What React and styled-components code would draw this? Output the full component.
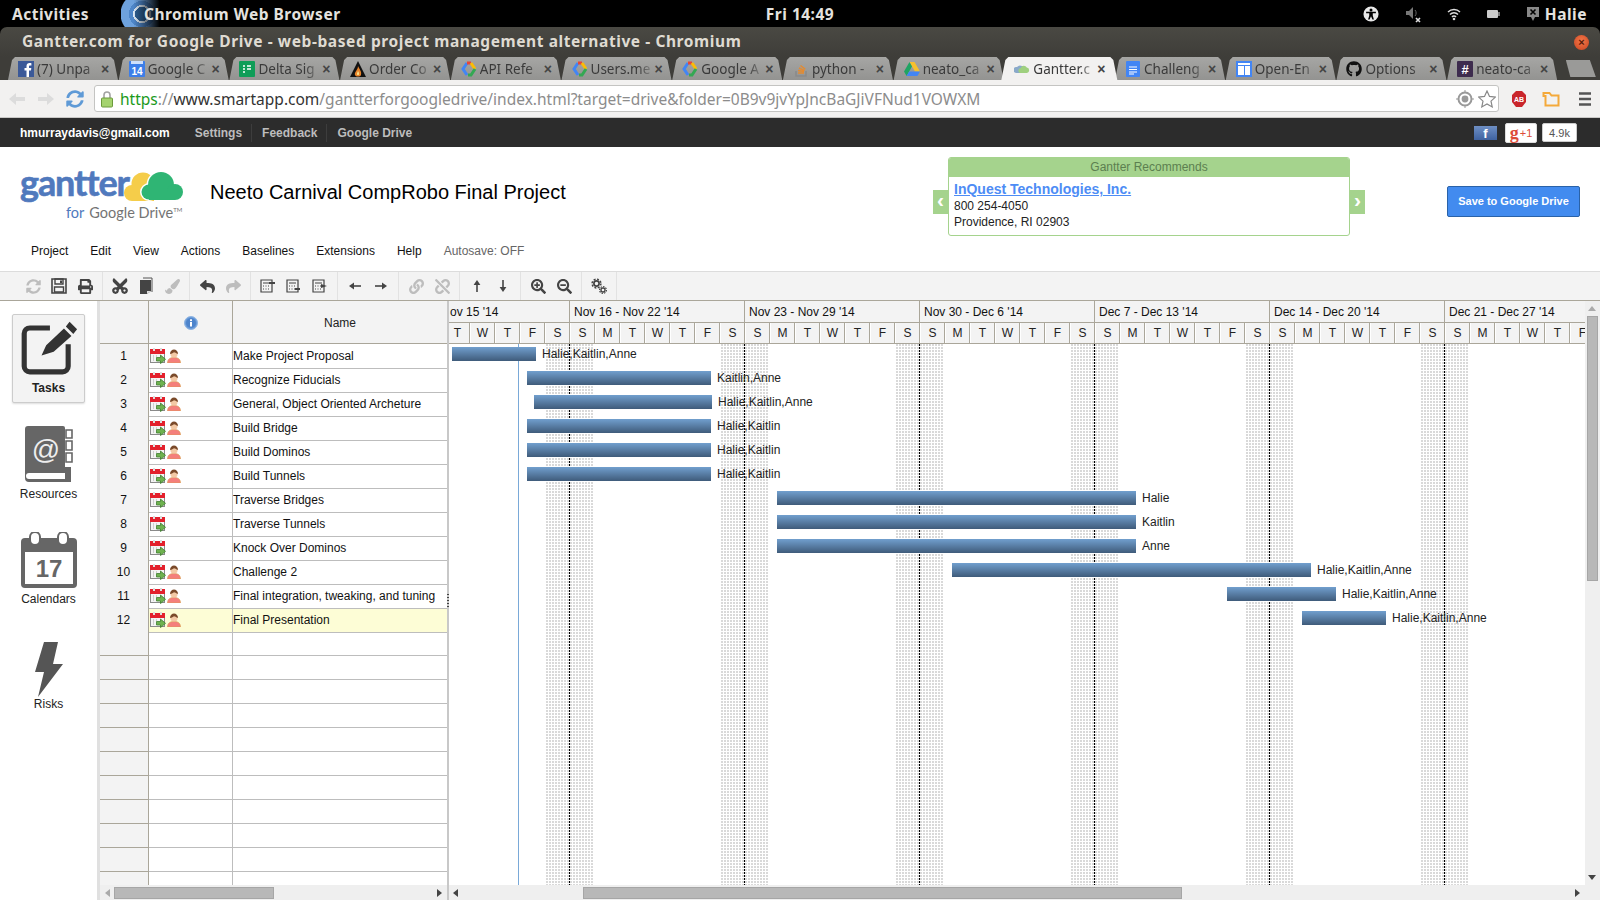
import React from "react";
import styled, { createGlobalStyle } from "styled-components";
import {
  FaPrint, FaCut, FaPaintBrush, FaReply, FaShare, FaLink, FaUnlink,
  FaSearchPlus, FaSearchMinus, FaGithub, FaSyncAlt,
} from "react-icons/fa";

const Global = createGlobalStyle`
  html, body { margin: 0; padding: 0; background: #fff; overflow: hidden; }
  * { box-sizing: border-box; }
  body { font-family: "Liberation Sans", Arial, sans-serif; font-size: 12px; color: #222; }
`;

const UI = `"Noto Sans", "Open Sans", sans-serif`;

const Page = styled.div`
  width: 1600px; height: 900px; overflow: hidden; display: flex; flex-direction: column; background: #000;
`;

/* ---------- GNOME top bar ---------- */
const TopBar = styled.div`
  height: 27px; flex: none; background: #000; color: #e4e2df;
  display: grid; grid-template-columns: 1fr auto 1fr; align-items: center;
  font: 700 15.5px ${UI}; letter-spacing: 0.5px;
`;
const TopLeft = styled.div`display: flex; align-items: center; padding-left: 12px;`;
const AppGlow = styled.div`
  width: 42px; height: 27px; margin-left: 32px; flex: none;
  background:
    linear-gradient(to right, transparent 30%, #000 92%),
    radial-gradient(circle at 21px 14px, #2d5f92 0 7px, #dbe8f4 7px 9px, #4e86c8 9px 13px, #6ea2dd 13px 21px, transparent 22px);
`;
const AppName = styled.span`margin-left: -19px; position: relative;`;
const Clock = styled.div`text-align: center;`;
const TopRight = styled.div`
  display: flex; align-items: center; justify-content: flex-end; gap: 26px; padding-right: 13px;
`;
const UserBox = styled.div`display: flex; align-items: center; gap: 5px;`;

/* ---------- Chromium chrome ---------- */
const TitleBar = styled.div`
  height: 30px; flex: none; display: flex; align-items: center; justify-content: space-between;
  padding: 0 11px 3px 22px; border-radius: 7px 7px 0 0;
  background: linear-gradient(#4a4943, #3e3d39);
  color: #dfdbd2; font: 700 15.5px ${UI}; letter-spacing: 0.58px;
`;
const CloseDot = styled.div`
  width: 15px; height: 15px; margin-top: 3px; border-radius: 50%; background: radial-gradient(circle at 50% 40%, #f4784a, #c8431f);
  color: #5a1a08; font: 700 11px/14px "Liberation Sans", sans-serif; text-align: center; letter-spacing: 0;
`;
const TabStrip = styled.div`
  height: 23px; flex: none; display: flex; padding-left: 4px; background: #3e3d39; position: relative;
`;
const Tab = styled.div`
  width: ${(p) => (p.$active ? 124 : 118)}px; height: 23px; flex: none;
  margin: 0 ${(p) => (p.$active ? -10.3 : -7.3)}px 0 ${(p) => (p.$active ? -3 : 0)}px;
  position: relative; z-index: ${(p) => (p.$active ? 2 : 1)};
  display: flex; align-items: center;
  padding-left: ${(p) => (p.$active ? 17 : 14)}px;
  clip-path: polygon(0 100%, 4px 100%, 8px 3px, 11px 0, calc(100% - 11px) 0, calc(100% - 8px) 3px, calc(100% - 4px) 100%, 100% 100%);
  background: ${(p) => (p.$active ? "#f2f1f0" : "linear-gradient(#a6a6a4, #939391)")};
  font: 13.5px ${UI}; color: #3a3a3a;
`;
const TabLabel = styled.span`
  width: 60px; margin-left: 3px; white-space: nowrap; overflow: hidden; flex: none;
  -webkit-mask-image: linear-gradient(to right, #000 78%, rgba(0,0,0,0.25) 100%);
  mask-image: linear-gradient(to right, #000 78%, rgba(0,0,0,0.25) 100%);
`;
const TabClose = styled.span`
  margin-left: 1px; width: 14px; text-align: center; font: 700 14px "Liberation Sans", sans-serif; color: #444;
`;
const NewTab = styled.div`
  width: 30px; height: 17px; margin: 3px 0 0 12px; flex: none;
  clip-path: polygon(0 0, 80% 0, 100% 100%, 15% 100%);
  background: #9a9a98;
`;
const AddressBar = styled.div`
  height: 38px; flex: none; background: #f2f1f0; border-bottom: 1px solid #c9c8c6;
  display: flex; align-items: center; padding-left: 8px;
`;
const NavBtn = styled.div`width: 18px; height: 18px; margin-right: 11px; flex: none;`;
const UrlField = styled.div`
  width: 1405px; height: 27px; margin-left: -1px; background: #fff; border: 1px solid #c4c4c2; border-radius: 3px;
  display: flex; align-items: center; padding-left: 6px; flex: none;
`;
const UrlText = styled.div`
  margin-left: 7px; flex: 1; white-space: nowrap; overflow: hidden; font: 15.5px ${UI}; color: #8c8c8c;
`;
const UrlScheme = styled.span`color: #1b9a1b;`;
const UrlHost = styled.span`color: #333;`;
const UrlIcons = styled.div`display: flex; align-items: center; gap: 4px; padding-right: 2px;`;
const ExtIcons = styled.div`
  display: flex; align-items: center; margin-left: 12px; gap: 15px;
`;
const MenuIcon = styled.div`margin-left: 3px;`;

/* ---------- Gantter account bar ---------- */
const AccountBar = styled.div`
  height: 29px; flex: none; background: #2c2c2c; display: flex; align-items: center; padding: 0 23px 0 20px;
  font: 700 12px "Liberation Sans", sans-serif; color: #bdbdbd;
`;
const Email = styled.span`color: #fff; margin-right: 25px;`;
const AccLink = styled.span`
  padding-right: 9px; margin-right: 10px; border-right: ${(p) => (p.$last ? "none" : "1px solid #3d3d3d")};
  line-height: 18px;
`;
const AccRight = styled.div`margin-left: auto; display: flex; align-items: center;`;
const FbBadge = styled.div`
  width: 23px; height: 14px; background: linear-gradient(#6e8fc4, #3f62a0); color: #fff;
  font: 700 13px/15px "Liberation Sans", sans-serif; text-align: center; margin-right: 8px;
`;
const GPlus = styled.div`
  width: 32px; height: 20px; background: #fff; border: 1px solid #ddd; border-radius: 2px; color: #dd4b39;
  display: flex; align-items: center; justify-content: center; margin-right: 5px;
  font: 700 18px/16px "Liberation Serif", serif;
`;
const GPlusOne = styled.span`font: 400 11px "Liberation Sans", sans-serif; margin-left: 1px;`;
const Count = styled.div`
  width: 35px; height: 19px; background: #fff; border: 1px solid #ccc; border-radius: 2px; color: #555;
  font: 400 11px/18px "Liberation Sans", sans-serif; text-align: center;
`;

/* ---------- Header ---------- */
const HeaderRow = styled.div`
  height: 90px; flex: none; background: #fff; display: flex; align-items: flex-start; padding-left: 20px;
`;
const Logo = styled.div`width: 163px; margin-top: 22px; flex: none; display: flex; flex-direction: column;`;
const LogoTop = styled.div`display: flex; align-items: flex-start; height: 36px;`;
const LogoWord = styled.span`
  font: 700 36px/26px Lato, "Open Sans", sans-serif; color: #5079bd; letter-spacing: -1.1px; width: 103px; flex: none;
  -webkit-text-stroke: 0.6px #5079bd; white-space: nowrap;
`;
const LogoClouds = styled.div`margin-top: 3px; flex: none;`;
const LogoBottom = styled.div`
  padding-left: 46px; font: 14.5px/16px Lato, sans-serif; color: #747474; white-space: nowrap;
`;
const LogoFor = styled.span`color: #5079bd; margin-right: 5px;`;
const LogoTm = styled.sup`font-size: 6px; line-height: 0;`;
const ProjectTitle = styled.div`
  margin: 34px 0 0 27px; width: 723px; flex: none; font: 20px/23px "Liberation Sans", sans-serif; color: #000; white-space: nowrap;
`;
const RecWrap = styled.div`display: flex; align-items: flex-start; margin-top: 10px; flex: none;`;
const RecArrow = styled.div`
  width: 15px; height: 24px; margin-top: 33px; background: #a5d38d; color: #fff; font: 700 21px/20px "Liberation Sans", sans-serif; text-align: center;
`;
const RecBox = styled.div`
  width: 402px; height: 79px; border: 1px solid #a5d38d; border-radius: 3px; overflow: hidden; background: #fff;
`;
const RecHead = styled.div`
  height: 19px; background: #a5d38d; color: #5c7f50; text-align: center; font: 12px/18px "Liberation Sans", sans-serif;
`;
const RecBody = styled.div`padding: 3px 5px; font: 12px/16.4px "Liberation Sans", sans-serif; color: #222;`;
const RecLink = styled.div`font: 700 14px/18px "Liberation Sans", sans-serif; color: #4d8cf5; text-decoration: underline;`;
const SaveBtn = styled.div`
  margin: 39px 0 0 82px; width: 133px; height: 31px; flex: none; background: #428bef; border: 1px solid #2a62a8; border-radius: 2px;
  color: #fff; font: 700 11px/29px "Liberation Sans", sans-serif; text-align: center;
`;
const MenuBar = styled.div`
  height: 34px; flex: none; background: #fff; display: flex; align-items: flex-start; padding: 7px 0 0 31px; gap: 22px;
  font: 12px/14px "Liberation Sans", sans-serif; color: #111;
`;
const Autosave = styled.span`color: #666;`;
const Toolbar = styled.div`
  height: 30px; flex: none; background: #f3f3f3; border-top: 1px solid #dcdcdc; border-bottom: 1px solid #aaa69a;
  display: flex; align-items: stretch; padding-left: 16px;
`;
const ToolGroup = styled.div`
  display: flex; padding: 0 4px; border-right: 1px solid #e2e2e2;
`;
const ToolBtn = styled.div`
  width: 26px; display: flex; align-items: center; justify-content: center; color: ${(p) => (p.$off ? "#bdbdbd" : "#444")};
  font-size: 15px;
`;
const Scissors = styled(FaCut)`transform: rotate(-90deg); font-size: 18px;`;

/* ---------- Main ---------- */
const Main = styled.div`flex: 1; min-height: 0; display: flex; background: #fff;`;
const SideNav = styled.div`
  width: 97px; flex: none; display: flex; flex-direction: column; padding: 13px 0 0 12px;
`;
const NavItem = styled.div`
  width: 73px; height: ${(p) => (p.$active ? 89 : 100)}px; margin-bottom: ${(p) => (p.$active ? 0 : 5)}px; flex: none;
  display: flex; flex-direction: column; align-items: center; justify-content: ${(p) => (p.$active ? "flex-start" : "flex-end")};
  padding: ${(p) => (p.$active ? "6px 0 0" : "0 0 2px")};
  ${(p) => p.$active && "background: #f3f3f3; border: 1px solid #ccc; border-radius: 2px; box-shadow: 0 1px 2px #ddd;"}
  font: ${(p) => (p.$active ? 700 : 400)} 12px/14px "Liberation Sans", sans-serif; color: #222;
`;
const NavLabel = styled.span`margin-top: ${(p) => p.$gap}px;`;
const Rule = styled.div`width: ${(p) => p.$w}px; flex: none; background: ${(p) => p.$c}; position: relative;`;
const Grip = styled.div`
  position: absolute; left: 0; top: 293px; width: 2px; height: 14px;
  background: repeating-linear-gradient(#444 0 1px, transparent 1px 3px);
`;
const GridPane = styled.div`width: 347px; flex: none; display: flex; flex-direction: column; min-height: 0;`;
const GridBody = styled.div`flex: 1; min-height: 0; overflow: hidden;`;
const COLS = "49px 84px 214px";
const GridHead = styled.div`
  display: grid; grid-template-columns: ${COLS}; height: 43px; background: #f3f3f3; border-bottom: 1px solid #aaa69a;
`;
const HeadCell = styled.div`
  border-right: 1px solid #aaa69a; display: flex; align-items: center; justify-content: center; color: #222; padding-top: 2px;
  &:last-child { border-right: none; }
`;
const Row = styled.div`
  display: grid; grid-template-columns: ${COLS}; height: 24px; background: ${(p) => (p.$sel ? "#fdfdd6" : "#fff")};
`;
const NumCell = styled.div`
  background: #f3f3f3; border-bottom: 1px solid #aaa69a; border-right: 1px solid #aaa69a; text-align: center;
  line-height: 24px; color: #111; padding-right: 1px;
`;
const IconCell = styled.div`
  border-bottom: 1px solid #bdbdbd; border-right: 1px solid #bdbdbd; display: flex; align-items: center; gap: 1px; padding: 0 0 1px 1px;
`;
const NameCell = styled.div`
  border-bottom: 1px solid #bdbdbd; line-height: 24px; white-space: nowrap; overflow: hidden; color: #111;
`;
const HScroll = styled.div`
  height: 15px; flex: none; background: #efefef; display: flex; align-items: center; position: relative;
`;
const Thumb = styled.div`
  position: absolute; top: 2px; bottom: 1px; background: #b8b8b8; border: 1px solid #a6a6a6;
`;
const ArrowGlyph = styled.div`
  position: absolute; width: 0; height: 0; top: 4px;
  border-top: 4px solid transparent; border-bottom: 4px solid transparent;
`;
const ArrowL = styled(ArrowGlyph)`border-right: 5px solid ${(p) => p.$c};`;
const ArrowR = styled(ArrowGlyph)`border-left: 5px solid ${(p) => p.$c};`;

const ChartPane = styled.div`flex: 1; min-width: 0; display: flex; flex-direction: column; overflow: hidden;`;
const ChartHead = styled.div`
  height: 43px; flex: none; background: #f3f3f3; border-bottom: 1px solid #aaa69a; overflow: hidden; position: relative;
`;
const WeekRow = styled.div`display: flex; height: 22px; width: 1136px; overflow: hidden; border-bottom: 1px solid #aaa69a;`;
const WeekCell = styled.div`
  width: ${(p) => p.$w}px; flex: none; border-right: 1px solid #aaa69a; line-height: 23px; padding-left: ${(p) => p.$pad}px; white-space: nowrap; color: #111;
`;
const DayRow = styled.div`display: flex; height: 21px; width: 1700px; margin-left: -4px;`;
const DayCell = styled.div`
  width: 25px; flex: none; border-right: 1px solid #aaa69a; text-align: center; line-height: 20px; color: #222; box-shadow: inset 1px 0 0 #fff; padding-left: 1px;
`;
const Canvas = styled.div`flex: 1; min-height: 0; position: relative; overflow: hidden; background: #fff;`;
const Weekend = styled.div`
  position: absolute; top: 0; bottom: 0; width: 48px;
  background-image: linear-gradient(to right, #d9d9d9 2px, transparent 2px);
  background-size: 3px 3px;
  -webkit-mask-image: linear-gradient(#000 2px, transparent 2px);
  mask-image: linear-gradient(#000 2px, transparent 2px);
  -webkit-mask-size: 3px 3px;
  mask-size: 3px 3px;
`;
const WeekLine = styled.div`
  position: absolute; top: 0; bottom: 0; width: 1px;
  background: repeating-linear-gradient(#000 0 2px, transparent 2px 3px);
`;
const TodayLine = styled.div`position: absolute; top: 0; bottom: 0; left: 69px; width: 1px; background: #7aa9d8;`;
const BarRow = styled.div`
  position: relative; height: 24px; display: flex; align-items: flex-start; padding-top: 3px; white-space: nowrap;
`;
const Bar = styled.div`
  height: 14px; flex: none; background: linear-gradient(#719fce, #3f5b7a);
`;
const BarLabel = styled.span`margin-left: 6px; line-height: 14px; color: #222;`;
const VScroll = styled.div`width: 15px; flex: none; background: #efefef; position: relative;`;
const VThumb = styled.div`
  position: absolute; top: 15px; left: 2px; width: 11px; height: 265px; background: #b8b8b8; border: 1px solid #a6a6a6;
`;
const TriUp = styled.div`
  position: absolute; top: 5px; left: 3px; width: 0; height: 0; border-left: 4px solid transparent; border-right: 4px solid transparent; border-bottom: 5px solid #aaa;
`;
const TriDown = styled.div`
  position: absolute; top: 574px; left: 3px; width: 0; height: 0; border-left: 4px solid transparent; border-right: 4px solid transparent; border-top: 5px solid #444;
`;

/* ---------- Icons ---------- */
const S = ({ w = 16, h = 16, vb, children }) => (
  <svg width={w} height={h} viewBox={vb || `0 0 ${w} ${h}`} style={{ flex: "none", display: "block" }}>{children}</svg>
);
const Hex = () => (
  <S>
    <path d="M6 2 L2 8 L6 14" fill="none" stroke="#4285f4" strokeWidth="3" />
    <path d="M6 2 H10" stroke="#ea4335" strokeWidth="3" />
    <path d="M10 2 L14 8" stroke="#fbbc05" strokeWidth="3" fill="none" />
    <path d="M14 8 L10 14 H7" stroke="#34a853" strokeWidth="3" fill="none" />
  </S>
);
const favicons = {
  fb: <S><rect width="16" height="16" fill="#3b5998" /><path fill="#fff" d="M11 16V9.5h2l.3-2.4H11V5.6c0-.7.2-1.2 1.2-1.2h1.2V2.2C13.2 2.2 12.5 2 11.6 2 9.7 2 8.5 3.2 8.5 5.2v1.9h-2v2.4h2V16z" /></S>,
  cal: <S><rect width="16" height="16" rx="1" fill="#3d7ee8" /><rect x="2" width="12" height="3" fill="#cfe0fb" /><text x="8" y="14" textAnchor="middle" fontSize="10" fontWeight="700" fontFamily="Liberation Sans" fill="#fff">14</text></S>,
  sheet: <S><rect width="16" height="16" rx="1" fill="#0f9d58" /><path d="M4 5h2M8 5h4M4 8h2M8 8h4M4 11h2" stroke="#fff" strokeWidth="1.5" /></S>,
  order: <S><path d="M8 0 L16 16 H0z" fill="#111" /><path d="M8 5c1 3 4 5 3 9-1 2-5 2-6 0-1-3 3-5 3-9z" fill="#e8832a" /><path d="M8 10c.6 1 1.4 2 1 3.4-.5.7-1.5.7-2 0-.3-1.3.7-2.2 1-3.4z" fill="#f7e08a" /></S>,
  hex: <Hex />,
  so: <S><path d="M3 10v5h10v-5" fill="none" stroke="#8a8a8a" strokeWidth="1.5" /><path d="M5 12h6M5 9.5l6 1M6 7l5.5 2.6M7.5 4.5l4.8 3.8" stroke="#e58a2e" strokeWidth="1.4" /></S>,
  drive: <S><path d="M5.5 1h5L16 10.5h-5z" fill="#f6c02c" /><path d="M5.5 1 0 10.5 2.6 15 8 5.5z" fill="#1fa463" /><path d="M2.6 15h10.8L16 10.5H5.2z" fill="#4285f4" /></S>,
  gantter: <S><path d="M2 12a3 3 0 0 1 1-6 4 4 0 0 1 5-1 3 3 0 0 1 1 7z" fill="#8aa9c9" /><path d="M6 12a2.6 2.6 0 0 1 .6-5 3.4 3.4 0 0 1 6.2-.5A2.8 2.8 0 0 1 13 12z" fill="#9fd07f" /></S>,
  doc: <S><rect x="1" width="14" height="16" rx="1" fill="#4285f4" /><path d="M4 6h8M4 8.5h8M4 11h8M4 13h5" stroke="#fff" strokeWidth="1.1" /></S>,
  open: <S><rect width="16" height="16" fill="#4285f4" /><rect x="2" y="5" width="6" height="9" fill="#fff" /><rect x="9" y="5" width="5" height="9" fill="#fff" /><rect x="2" y="2" width="12" height="2" fill="#fff" /></S>,
  gh: <FaGithub size={16} color="#111" style={{ flex: "none" }} />,
  hash: <S><rect width="16" height="16" rx="1" fill="#3e2c4e" /><text x="8" y="13" textAnchor="middle" fontSize="13" fontWeight="700" fontFamily="Liberation Sans" fill="#fff">#</text></S>,
};
const tabs = [
  ["fb", "(7) Unpa"], ["cal", "Google C"], ["sheet", "Delta Sig"], ["order", "Order Co"],
  ["hex", "API Refe"], ["hex", "Users.me"], ["hex", "Google A"], ["so", "python -"],
  ["drive", "neato_ca"], ["gantter", "Gantter.c", true], ["doc", "Challeng"], ["open", "Open-En"],
  ["gh", "Options"], ["hash", "neato-ca"],
];

const DayCalIcon = () => (
  <S w={16} h={16}>
    <rect x="0.5" y="1.5" width="14" height="13" fill="#f4f4f4" stroke="#8a8a8a" />
    <rect x="0" y="1" width="15" height="5" fill="#e3202c" />
    <rect x="3" y="0" width="2" height="3" fill="#ddd" />
    <rect x="10" y="0" width="2" height="3" fill="#ddd" />
    <path d="M3 8h1M3 10h1M6 8h1M3 12h1" stroke="#aaa" />
    <path d="M6.5 9.5h4V7l5 4.3-5 4.3V13h-4z" fill="#6fb24f" stroke="#3d7d2f" strokeWidth="0.8" />
  </S>
);
const PersonIcon = () => (
  <S w={14} h={14} vb="0 -1 14 14">
    <path d="M0.5 13c0-4 2.5-5.5 6.5-5.5s6.5 1.5 6.5 5.5z" fill="#f47f7c" stroke="#d8a04a" strokeWidth="0.6" />
    <circle cx="7" cy="4" r="3.6" fill="#f3c9a5" />
    <path d="M3 4c0-3 2-4.5 4-4.5S11 1 11 4C9 3 8 2.4 7 2.2 6 3 5 3.5 3 4z" fill="#7a4a2a" />
  </S>
);
const InfoIcon = () => (
  <S w={14} h={14}>
    <circle cx="7" cy="7" r="6.5" fill="#6a9bd8" stroke="#8fb4e2" />
    <circle cx="7" cy="7" r="5" fill="#4d84cc" />
    <rect x="6" y="6" width="2" height="4.5" fill="#fff" />
    <rect x="6" y="3.3" width="2" height="1.8" fill="#fff" />
  </S>
);

const SaveIcon = () => (
  <S w={16} h={16}>
    <path d="M1 1h14v14H1z" fill="none" stroke="#444" strokeWidth="1.6" />
    <path d="M4 1h8v5H4zM3.5 9h9v5h-9z" fill="none" stroke="#444" strokeWidth="1.4" />
    <path d="M9 2.5h2v2.5H9z" fill="#444" />
  </S>
);
const CopyIcon = () => (
  <S w={14} h={18}>
    <path d="M4 1h9v14" fill="none" stroke="#555" strokeWidth="1" />
    <path d="M1 3h11v11l-4 3H1z" fill="#444" />
    <path d="M8 17v-3h4z" fill="#ddd" />
  </S>
);
const IndentIcon = ({ v }) => (
  <S w={16} h={14}>
    <path d="M1 1h11v12H1z" fill="#f3f3f3" stroke="#444" strokeWidth="1.2" />
    <path d="M3 4h7M3 7h1M5.5 7h1M8 7h1M3 10h1M5.5 10h1M8 10h1" stroke="#444" strokeWidth="1.2" />
    {v === 0 && <path d="M9 3h6v2H9z" fill="#444" />}
    {v === 1 && <path d="M9 9h5v2H9z" fill="#444" />}
    {v === 2 && <path d="M9 5v4l6-2z" fill="#444" />}
  </S>
);
const ThinArrow = ({ r = 0 }) => (
  <svg width="14" height="12" viewBox="0 0 14 12" style={{ transform: `rotate(${r}deg)`, display: "block" }}>
    <path d="M13 6H4" stroke="#444" strokeWidth="1.6" />
    <path d="M1 6l5-3.4v6.8z" fill="#444" />
  </svg>
);
const GearsIcon = () => (
  <S w={16} h={16}>
    <circle cx="5.5" cy="5.5" r="2.6" fill="none" stroke="#444" strokeWidth="1.7" />
    <circle cx="5.5" cy="5.5" r="4.4" fill="none" stroke="#444" strokeWidth="1.5" strokeDasharray="2 1.45" />
    <circle cx="12" cy="12" r="2" fill="none" stroke="#444" strokeWidth="1.3" />
    <circle cx="12" cy="12" r="3.4" fill="none" stroke="#444" strokeWidth="1.2" strokeDasharray="1.6 1" />
  </S>
);

const TasksIcon = () => (
  <svg width="58" height="56" viewBox="0 6 62 56" style={{ display: "block" }}>
    <path d="M32 8.5H10.5a6 6 0 0 0-6 6v35a6 6 0 0 0 6 6h35a6 6 0 0 0 6-6V26" transform="translate(0 3)" fill="none" stroke="#333" strokeWidth="5.5" />
    <path d="M23 41l5-11 19-18 8 8-19 17zM49 10l4-5 8 8-4 5z" fill="#333" />
  </svg>
);
const ResIcon = () => (
  <svg width="48" height="56" viewBox="0 0 48 56" style={{ display: "block" }}>
    <path d="M3 0h35a2 2 0 0 1 2 2v45H4a3 3 0 0 0 0 6h36v-12h6v15H4a4 4 0 0 1-4-4V3a3 3 0 0 1 3-3z" fill="#666" />
    <path d="M41 4h6v8h-6zM41 15h6v9h-6zM41 27h6v9h-6z" fill="#fff" stroke="#666" strokeWidth="1.6" />
    <text x="21" y="33" textAnchor="middle" fontSize="28" fontFamily="Liberation Sans" fill="#eee">@</text>
  </svg>
);
const CalIcon = () => (
  <svg width="56" height="56" viewBox="0 0 56 56" style={{ display: "block" }}>
    <rect y="6" width="56" height="50" rx="4" fill="#666" />
    <rect x="4" y="20" width="48" height="32" fill="#fff" />
    <rect x="9" y="0" width="10" height="13" rx="5" fill="#fff" stroke="#666" strokeWidth="2" />
    <rect x="37" y="0" width="10" height="13" rx="5" fill="#fff" stroke="#666" strokeWidth="2" />
    <text x="28" y="45" textAnchor="middle" fontSize="24" fontWeight="700" fontFamily="Liberation Sans" fill="#666">17</text>
  </svg>
);
const RiskIcon = () => (
  <svg width="28" height="55" viewBox="0 0 28 55" style={{ display: "block" }}>
    <path d="M9 0h14l-5 22h10L3 55l6-25H0z" fill="#555" />
  </svg>
);

/* ---------- Data ---------- */
const tasks = [
  ["Make Project Proposal", 1, 3, 84, "Halie,Kaitlin,Anne"],
  ["Recognize Fiducials", 1, 78, 184, "Kaitlin,Anne"],
  ["General, Object Oriented Archeture", 1, 85, 178, "Halie,Kaitlin,Anne"],
  ["Build Bridge", 1, 78, 184, "Halie,Kaitlin"],
  ["Build Dominos", 1, 78, 184, "Halie,Kaitlin"],
  ["Build Tunnels", 1, 78, 184, "Halie,Kaitlin"],
  ["Traverse Bridges", 0, 328, 359, "Halie"],
  ["Traverse Tunnels", 0, 328, 359, "Kaitlin"],
  ["Knock Over Dominos", 0, 328, 359, "Anne"],
  ["Challenge 2", 1, 503, 359, "Halie,Kaitlin,Anne"],
  ["Final integration, tweaking, and tuning", 1, 778, 109, "Halie,Kaitlin,Anne"],
  ["Final Presentation", 1, 853, 84, "Halie,Kaitlin,Anne"],
];
const weeks = ["Nov 16 - Nov 22 '14", "Nov 23 - Nov 29 '14", "Nov 30 - Dec 6 '14", "Dec 7 - Dec 13 '14", "Dec 14 - Dec 20 '14", "Dec 21 - Dec 27 '14"];
const dayLetters = ("TWTFS" + "SMTWTFS".repeat(5) + "SMTWTF").split("");
const blanks = Array.from({ length: 11 });

export default function App() {
  return (
    <Page>
      <Global />
      <TopBar>
        <TopLeft>
          <span>Activities</span>
          <AppGlow />
          <AppName>Chromium Web Browser</AppName>
        </TopLeft>
        <Clock>Fri 14:49</Clock>
        <TopRight>
          <S w={16} h={16} vb="0 0 18 18"><circle cx="9" cy="9" r="8.5" fill="#e8e8e8" /><circle cx="9" cy="4.6" r="1.7" fill="#000" /><path d="M3.5 6.5h11v1.6H11V11l1.3 4.2h-1.7L9 11.6l-1.6 3.6H5.7L7 11V8.1H3.5z" fill="#000" /></S>
          <S w={16} h={18}><path d="M1 6h3l4-4v12l-4-4H1z" fill="#777" /><path d="M10 5c1.5 1.5 1.5 4.5 0 6" stroke="#666" fill="none" /><path d="M11 13l4 4M15 13l-4 4" stroke="#ddd" strokeWidth="1.6" /></S>
          <S w={14} h={14}><path d="M1 5a8.5 8.5 0 0 1 12 0M3 7.5a5.5 5.5 0 0 1 8 0M5 10a2.6 2.6 0 0 1 4 0" fill="none" stroke="#ddd" strokeWidth="1.4" /><circle cx="7" cy="12" r="1.3" fill="#ddd" /></S>
          <S w={13} h={8}><rect x="0" y="0" width="11" height="8" rx="1" fill="#ccc" /><rect x="11" y="2" width="2" height="4" fill="#777" /></S>
          <UserBox>
            <S w={14} h={16}><path d="M1 1h12v10H9l-2 4-2-4H1z" fill="#888" /><path d="M4.5 3.5l5 5M9.5 3.5l-5 5" stroke="#000" strokeWidth="1.6" /></S>
            <span>Halie</span>
          </UserBox>
        </TopRight>
      </TopBar>

      <TitleBar>
        <span>Gantter.com for Google Drive - web-based project management alternative - Chromium</span>
        <CloseDot>×</CloseDot>
      </TitleBar>

      <TabStrip>
        {tabs.map(([icon, label, active]) => (
          <Tab key={label} $active={active}>
            {favicons[icon]}
            <TabLabel>{label}</TabLabel>
            <TabClose>×</TabClose>
          </Tab>
        ))}
        <NewTab />
      </TabStrip>

      <AddressBar>
        <NavBtn><S w={18} h={18}><path d="M1 9l7-6v4h9v4H8v4z" fill="#dcdcdc" /></S></NavBtn>
        <NavBtn><S w={18} h={18}><path d="M17 9l-7-6v4H1v4h9v4z" fill="#dcdcdc" /></S></NavBtn>
        <NavBtn><FaSyncAlt size={18} color="#5f9ad6" /></NavBtn>
        <UrlField>
          <S w={12} h={18}><path d="M3 8V5a3 3 0 0 1 6 0v3" fill="none" stroke="#a3a3a3" strokeWidth="1.6" /><rect x="0.5" y="8" width="11" height="9" rx="1" fill="#a4d36e" stroke="#6c9a3c" /></S>
          <UrlText>
            <UrlScheme>https</UrlScheme>://<UrlHost>www.smartapp.com</UrlHost>/gantterforgoogledrive/index.html?target=drive&amp;folder=0B9v9jvYpJncBaGJiVFNud1VOWXM
          </UrlText>
          <UrlIcons>
            <S w={18} h={18}><circle cx="9" cy="9" r="6.5" fill="none" stroke="#999" strokeWidth="2" /><circle cx="9" cy="9" r="3.4" fill="#999" /><path d="M9 0v3M9 15v3M0 9h3M15 9h3" stroke="#999" /></S>
            <S w={18} h={18}><path d="M9 1l2.5 5.4 5.9.7-4.4 4 1.2 5.8L9 14l-5.2 2.9L5 11.1l-4.4-4 5.9-.7z" fill="#fff" stroke="#888" strokeWidth="1.2" /></S>
          </UrlIcons>
        </UrlField>
        <ExtIcons>
          <S w={16} h={18}><path d="M5 1h6l4 4v7l-4 5H5l-4-5V5z" fill="#c9252b" /><text x="8" y="12" textAnchor="middle" fontSize="7" fontWeight="700" fontFamily="Liberation Sans" fill="#fff">AB</text></S>
          <S w={18} h={16}><path d="M1.5 2h6l2 2.5h7v10H3.5V5h-2z" fill="none" stroke="#f4a93a" strokeWidth="2" /></S>
          <MenuIcon><S w={14} h={14}><path d="M1 1.5h12M1 7h12M1 12.5h12" stroke="#555" strokeWidth="2.6" /></S></MenuIcon>
        </ExtIcons>
      </AddressBar>

      <AccountBar>
        <Email>hmurraydavis@gmail.com</Email>
        <AccLink>Settings</AccLink>
        <AccLink>Feedback</AccLink>
        <AccLink $last>Google Drive</AccLink>
        <AccRight>
          <FbBadge>f</FbBadge>
          <GPlus>g<GPlusOne>+1</GPlusOne></GPlus>
          <Count>4.9k</Count>
        </AccRight>
      </AccountBar>

      <HeaderRow>
        <Logo>
          <LogoTop>
            <LogoWord>gantter</LogoWord>
            <LogoClouds>
              <S w={60} h={31}>
                <g fill="#f5cd4a">
                  <circle cx="9" cy="21" r="8" />
                  <circle cx="20" cy="12" r="11.5" />
                  <rect x="9" y="18" width="22" height="11" />
                </g>
                <g fill="#fff" stroke="#fff" strokeWidth="3">
                  <circle cx="26" cy="20" r="7.5" />
                  <circle cx="38" cy="13" r="13" />
                </g>
                <g fill="#2fb574">
                  <circle cx="26" cy="20" r="7.5" />
                  <circle cx="38" cy="13" r="13" />
                  <circle cx="52" cy="20" r="8" />
                  <rect x="26" y="20" width="26" height="8" />
                </g>
              </S>
            </LogoClouds>
          </LogoTop>
          <LogoBottom><LogoFor>for</LogoFor>Google Drive<LogoTm>TM</LogoTm></LogoBottom>
        </Logo>
        <ProjectTitle>Neeto Carnival CompRobo Final Project</ProjectTitle>
        <RecWrap>
          <RecArrow>‹</RecArrow>
          <RecBox>
            <RecHead>Gantter Recommends</RecHead>
            <RecBody>
              <RecLink>InQuest Technologies, Inc.</RecLink>
              800 254-4050<br />Providence, RI 02903
            </RecBody>
          </RecBox>
          <RecArrow>›</RecArrow>
        </RecWrap>
        <SaveBtn>Save to Google Drive</SaveBtn>
      </HeaderRow>

      <MenuBar>
        {["Project", "Edit", "View", "Actions", "Baselines", "Extensions", "Help"].map((m) => <span key={m}>{m}</span>)}
        <Autosave>Autosave: OFF</Autosave>
      </MenuBar>

      <Toolbar>
        <ToolGroup>
          <ToolBtn $off><FaSyncAlt /></ToolBtn>
          <ToolBtn><SaveIcon /></ToolBtn>
          <ToolBtn><FaPrint /></ToolBtn>
        </ToolGroup>
        <ToolGroup>
          <ToolBtn><Scissors /></ToolBtn>
          <ToolBtn><CopyIcon /></ToolBtn>
          <ToolBtn $off><FaPaintBrush /></ToolBtn>
        </ToolGroup>
        <ToolGroup>
          <ToolBtn><FaReply /></ToolBtn>
          <ToolBtn $off><FaShare /></ToolBtn>
        </ToolGroup>
        <ToolGroup>
          <ToolBtn><IndentIcon v={0} /></ToolBtn>
          <ToolBtn><IndentIcon v={1} /></ToolBtn>
          <ToolBtn><IndentIcon v={2} /></ToolBtn>
        </ToolGroup>
        <ToolGroup>
          <ToolBtn><ThinArrow /></ToolBtn>
          <ToolBtn><ThinArrow r={180} /></ToolBtn>
        </ToolGroup>
        <ToolGroup>
          <ToolBtn $off><FaLink /></ToolBtn>
          <ToolBtn $off><FaUnlink /></ToolBtn>
        </ToolGroup>
        <ToolGroup>
          <ToolBtn><ThinArrow r={90} /></ToolBtn>
          <ToolBtn><ThinArrow r={-90} /></ToolBtn>
        </ToolGroup>
        <ToolGroup>
          <ToolBtn><FaSearchPlus /></ToolBtn>
          <ToolBtn><FaSearchMinus /></ToolBtn>
        </ToolGroup>
        <ToolGroup>
          <ToolBtn><GearsIcon /></ToolBtn>
        </ToolGroup>
      </Toolbar>

      <Main>
        <SideNav>
          <NavItem $active><TasksIcon /><NavLabel $gap={4}>Tasks</NavLabel></NavItem>
          <NavItem><ResIcon /><NavLabel $gap={5}>Resources</NavLabel></NavItem>
          <NavItem><CalIcon /><NavLabel $gap={4}>Calendars</NavLabel></NavItem>
          <NavItem><RiskIcon /><NavLabel $gap={0}>Risks</NavLabel></NavItem>
        </SideNav>
        <Rule $w={3} $c="#e0e0e0" />
        <GridPane>
          <GridHead>
            <HeadCell />
            <HeadCell><InfoIcon /></HeadCell>
            <HeadCell>Name</HeadCell>
          </GridHead>
          <GridBody>
            {tasks.map(([name, person], i) => (
              <Row key={name} $sel={i === 11}>
                <NumCell>{i + 1}</NumCell>
                <IconCell><DayCalIcon />{person ? <PersonIcon /> : null}</IconCell>
                <NameCell>{name}</NameCell>
              </Row>
            ))}
            {blanks.map((_, i) => (
              <Row key={i}><NumCell /><IconCell /><NameCell /></Row>
            ))}
          </GridBody>
          <HScroll>
            <ArrowL $c="#aaa" style={{ left: 5 }} />
            <Thumb style={{ left: 14, width: 160 }} />
            <ArrowR $c="#444" style={{ left: 337 }} />
          </HScroll>
        </GridPane>
        <Rule $w={2} $c="#c8c8c8"><Grip /></Rule>
        <ChartPane>
          <ChartHead>
            <WeekRow>
              <WeekCell $w={121} $pad={1}>ov 15 '14</WeekCell>
              {weeks.map((w) => <WeekCell key={w} $w={175} $pad={4}>{w}</WeekCell>)}
            </WeekRow>
            <DayRow>
              {dayLetters.map((d, i) => <DayCell key={i}>{d}</DayCell>)}
            </DayRow>
          </ChartHead>
          <Canvas>
            {[0, 1, 2, 3, 4, 5, 6].map((k) => (
              <React.Fragment key={k}>
                <Weekend style={{ left: 97 + 175 * k }} />
                <WeekLine style={{ left: 120 + 175 * k }} />
              </React.Fragment>
            ))}
            <TodayLine />
            {tasks.map(([name, , x, w, who]) => (
              <BarRow key={name}>
                <Bar style={{ marginLeft: x, width: w }} />
                <BarLabel>{who}</BarLabel>
              </BarRow>
            ))}
          </Canvas>
          <HScroll>
            <ArrowL $c="#444" style={{ left: 4 }} />
            <Thumb style={{ left: 134, width: 599 }} />
            <ArrowR $c="#444" style={{ left: 1126 }} />
          </HScroll>
        </ChartPane>
        <VScroll>
          <TriUp />
          <VThumb />
          <TriDown />
        </VScroll>
      </Main>
    </Page>
  );
}
